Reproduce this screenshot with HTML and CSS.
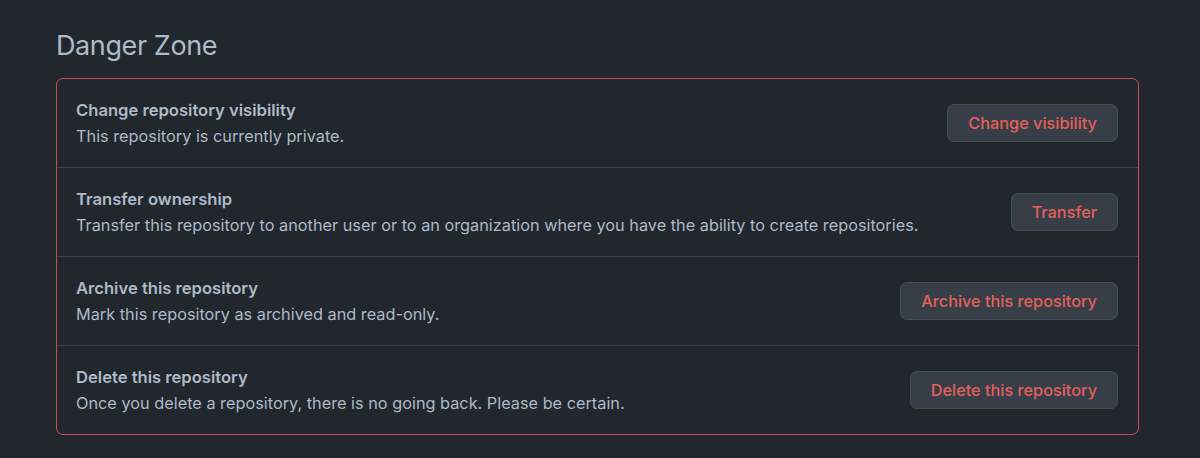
FILE: index.html
```html
<!DOCTYPE html>
<html lang="en">
<head>
    <meta charset="UTF-8">
    <meta name="viewport" content="width=device-width, initial-scale=1.0">
    <title>Danger Zone</title>
    <link rel="stylesheet" href="styles.css">
</head>
<body>

    <div class="container">
        <h2 class="zone-title">Danger Zone</h2>

        <div class="danger-box">
            <div class="danger-row">
                <div class="row-text">
                    <strong>Change repository visibility</strong>
                    <p>This repository is currently private.</p>
                </div>
                <button type="button">Change visibility</button>
            </div>
            <div class="danger-row">
                <div class="row-text">
                    <strong>Transfer ownership</strong>
                    <p>Transfer this repository to another user or to an organization where you have the ability to create repositories.</p>
                </div>
                <button type="button">Transfer</button>
            </div>
            <div class="danger-row">
                <div class="row-text">
                    <strong>Archive this repository</strong>
                    <p>Mark this repository as archived and read-only.</p>
                </div>
                <button type="button">Archive this repository</button>
            </div>
            <div class="danger-row">
                <div class="row-text">
                    <strong>Delete this repository</strong>
                    <p>Once you delete a repository, there is no going back. Please be certain.</p>
                </div>
                <button type="button">Delete this repository</button>
            </div>
        </div>
    </div>

</body>
</html>
```

FILE: styles.css
```css
body {
    margin: 0;
    font-family: Inter, "Noto Sans", sans-serif;
    background-color: #22272e;
    color: #adbac7;
}
.container {
    padding: 30px 61px 22px 56px;
}
.zone-title {
    margin: 0 0 16px;
    font-size: 27px;
    font-weight: 400;
    letter-spacing: -0.4px;
    line-height: 32px;
}
.danger-box {
    border: 1px solid #c9504a;
    border-radius: 7px;
}
.danger-row {
    display: flex;
    align-items: center;
    justify-content: space-between;
    height: 88px;
    padding: 0 20px 0 19px;
    border-top: 1px solid #3d444d;
}
.danger-row:first-child {
    border-top: none;
}
.row-text strong {
    display: block;
    font-size: 16.6px;
    font-weight: 600;
    line-height: 26px;
}
.row-text p {
    margin: 0;
    font-size: 16.3px;
    line-height: 26px;
}
button {
    height: 38px;
    padding: 0 20px;
    font-family: inherit;
    font-size: 16.3px;
    font-weight: 500;
    color: #e2605a;
    background-color: #373e47;
    border: 1px solid #444c56;
    border-radius: 7px;
    cursor: pointer;
}
button:hover {
    background-color: #3d444e;
}
```
